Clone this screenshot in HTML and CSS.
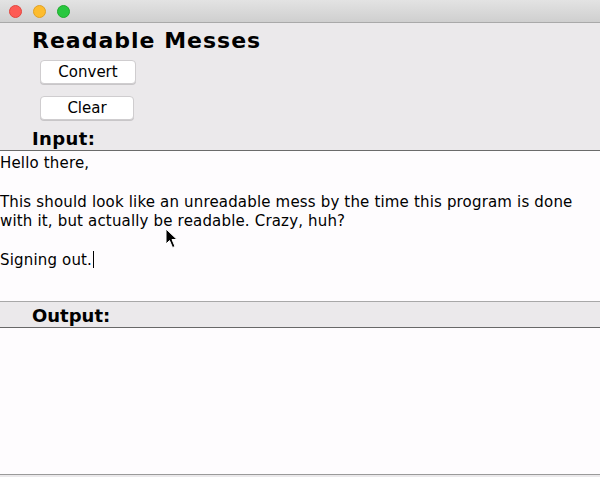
FILE: index.html
```html
<!DOCTYPE html>
<html>
<head>
<meta charset="utf-8">
<link rel="stylesheet" href="styles.css">
</head>
<body>
<div class="window">
  <div class="titlebar">
    <span class="light red"></span>
    <span class="light yellow"></span>
    <span class="light green"></span>
  </div>
  <div class="top">
    <h1 class="title">Readable Messes</h1>
    <div class="buttons">
      <button class="btn btn-convert">Convert</button>
      <button class="btn btn-clear">Clear</button>
    </div>
    <div class="label">Input:</div>
  </div>
  <div class="textarea input">
    <div class="line">Hello there,</div>
    <div class="line">&nbsp;</div>
    <div class="line">This should look like an unreadable mess by the time this program is done</div>
    <div class="line">with it, but actually be readable. Crazy, huh?</div>
    <div class="line">&nbsp;</div>
    <div class="line">Signing out.<span class="caret"></span></div>
    <svg class="pointer" width="14" height="22" viewBox="0 0 14 22">
      <path d="M1 1 L1 16 L4.5 12.5 L7.5 19.5 L10 18.5 L7 11.5 L12 11.5 Z" fill="#000" stroke="#fff" stroke-width="1" stroke-linejoin="round"/>
    </svg>
  </div>
  <div class="label-band">
    <div class="label">Output:</div>
  </div>
  <div class="textarea output"></div>
</div>
</body>
</html>
```
FILE: styles.css
```css
html, body {
  margin: 0;
  padding: 0;
  background: #ebe9eb;
}
.window {
  width: 600px;
  height: 477px;
  background: #ebe9eb;
  font-family: "DejaVu Sans", "Verdana", sans-serif;
  color: #000;
  overflow: hidden;
}
.titlebar {
  height: 23px;
  box-sizing: border-box;
  background: linear-gradient(#e3e3e3, #cfcfcf);
  border-bottom: 1px solid #a9a9a9;
  display: flex;
  align-items: center;
  gap: 11px;
  padding-left: 9px;
}
.light {
  width: 13px;
  height: 13px;
  border-radius: 50%;
  box-sizing: border-box;
}
.red { background: #fd5b55; border: 1px solid #e2463f; }
.yellow { background: #fdbc2e; border: 1px solid #e0a124; }
.green { background: #28c73f; border: 1px solid #1eab2c; }
.top {
  padding: 5px 0 0 32px;
  height: 127px;
  box-sizing: border-box;
}
.title {
  margin: 0;
  font-size: 22px;
  font-weight: bold;
  line-height: 26px;
  letter-spacing: 1px;
}
.buttons {
  display: flex;
  flex-direction: column;
  align-items: flex-start;
  gap: 12px;
  padding-left: 8px;
  margin-top: 6px;
}
.btn {
  font-family: inherit;
  font-size: 15px;
  height: 24px;
  background: #fff;
  border: 1px solid #cfcdcf;
  border-radius: 4px;
  padding: 0;
  color: #000;
  line-height: 20px;
  box-shadow: 0 1px 0 #c8c6c8;
}
.btn-convert { width: 96px; }
.btn-clear { width: 94px; }
.label {
  font-size: 18px;
  font-weight: bold;
  line-height: 20px;
}
.top .label { margin-top: 9px; letter-spacing: 0.4px; }
.textarea {
  background: #fefcfe;
  position: relative;
  box-sizing: border-box;
}
.input {
  height: 152px;
  border-top: 1px solid #6b6b6b;
  border-bottom: 1px solid #a8a8a8;
  padding-top: 3px;
  font-size: 15px;
  line-height: 19.4px;
  letter-spacing: 0.17px;
}
.line { white-space: nowrap; }
.caret {
  display: inline-block;
  width: 1px;
  height: 17px;
  background: #000;
  vertical-align: -3px;
  margin-left: 1px;
}
.pointer {
  position: absolute;
  left: 165px;
  top: 77px;
}
.label-band {
  height: 26px;
  box-sizing: border-box;
  border-bottom: 1px solid #686868;
  padding: 4px 0 0 32px;
}
.output {
  height: 147px;
  border-bottom: 1px solid #9a9a9a;
}
```
